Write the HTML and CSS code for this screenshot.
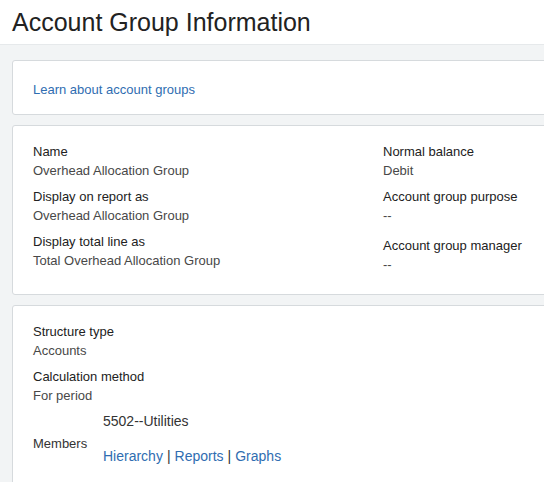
FILE: index.html
```html
<!DOCTYPE html>
<html lang="en">
<head>
<meta charset="utf-8">
<title>Account Group Information</title>
<link rel="stylesheet" href="styles.css">
</head>
<body>
<header class="page-header">
  <h1 class="page-title">Account Group Information</h1>
</header>
<main class="content">
  <section class="card card-help">
    <a class="link" href="#">Learn about account groups</a>
  </section>

  <section class="card card-details">
    <div class="col col-left">
      <div class="field">
        <div class="label">Name</div>
        <div class="value">Overhead Allocation Group</div>
      </div>
      <div class="field">
        <div class="label">Display on report as</div>
        <div class="value">Overhead Allocation Group</div>
      </div>
      <div class="field">
        <div class="label">Display total line as</div>
        <div class="value">Total Overhead Allocation Group</div>
      </div>
    </div>
    <div class="col col-right">
      <div class="field">
        <div class="label">Normal balance</div>
        <div class="value">Debit</div>
      </div>
      <div class="field field-tall">
        <div class="label">Account group purpose</div>
        <div class="value">--</div>
      </div>
      <div class="field">
        <div class="label">Account group manager</div>
        <div class="value">--</div>
      </div>
    </div>
  </section>

  <section class="card card-structure">
    <div class="field">
      <div class="label">Structure type</div>
      <div class="value">Accounts</div>
    </div>
    <div class="field">
      <div class="label">Calculation method</div>
      <div class="value">For period</div>
    </div>
    <div class="members">
      <div class="members-label">Members</div>
      <div class="members-list">
        <div class="member-item">5502--Utilities</div>
        <div class="member-links">
          <a class="link" href="#">Hierarchy</a><span class="sep">|</span><a class="link" href="#">Reports</a><span class="sep">|</span><a class="link" href="#">Graphs</a>
        </div>
      </div>
    </div>
  </section>
</main>
</body>
</html>
```

FILE: styles.css
```css
html, body {
  margin: 0;
  padding: 0;
  overflow: hidden;
  background: #f2f4f5;
  font-family: "Liberation Sans", Arial, sans-serif;
  font-size: 13px;
  color: #444;
}

.page-header {
  height: 45px;
  background: #ffffff;
  border-bottom: 1px solid #e6e9eb;
  box-sizing: border-box;
  padding: 8px 0 0 12px;
}

.page-title {
  margin: 0;
  font-size: 25px;
  font-weight: normal;
  line-height: 29px;
  color: #222;
}

.content {
  padding: 15px 0 0 12px;
  display: flex;
  flex-direction: column;
  gap: 10px;
}

.card {
  width: 620px;
  background: #ffffff;
  border: 1px solid #d6dadd;
  border-radius: 3px;
  box-sizing: border-box;
}

.card-help {
  padding: 21px 20px 16px 20px;
  line-height: 16px;
}

.link {
  color: #2f6db1;
  text-decoration: none;
}

.card-details {
  display: flex;
  padding: 16px 20px 13px 20px;
}

.col-left {
  width: 350px;
}

.card-structure {
  padding: 16px 20px 30px 20px;
}

.field {
  margin-bottom: 7px;
}

.field-tall {
  margin-bottom: 11px;
}

.label {
  line-height: 19px;
  color: #222;
}

.value {
  line-height: 19px;
  color: #484848;
}

.members {
  display: flex;
  align-items: flex-start;
}

.members-label {
  width: 70px;
  margin-top: 22px;
  line-height: 19px;
  color: #333;
}

.members-list {
  font-size: 14px;
}

.member-item {
  line-height: 19px;
  color: #333;
}

.member-links {
  margin-top: 16px;
  line-height: 19px;
}

.sep {
  color: #333;
  padding: 0 4px;
}
```
